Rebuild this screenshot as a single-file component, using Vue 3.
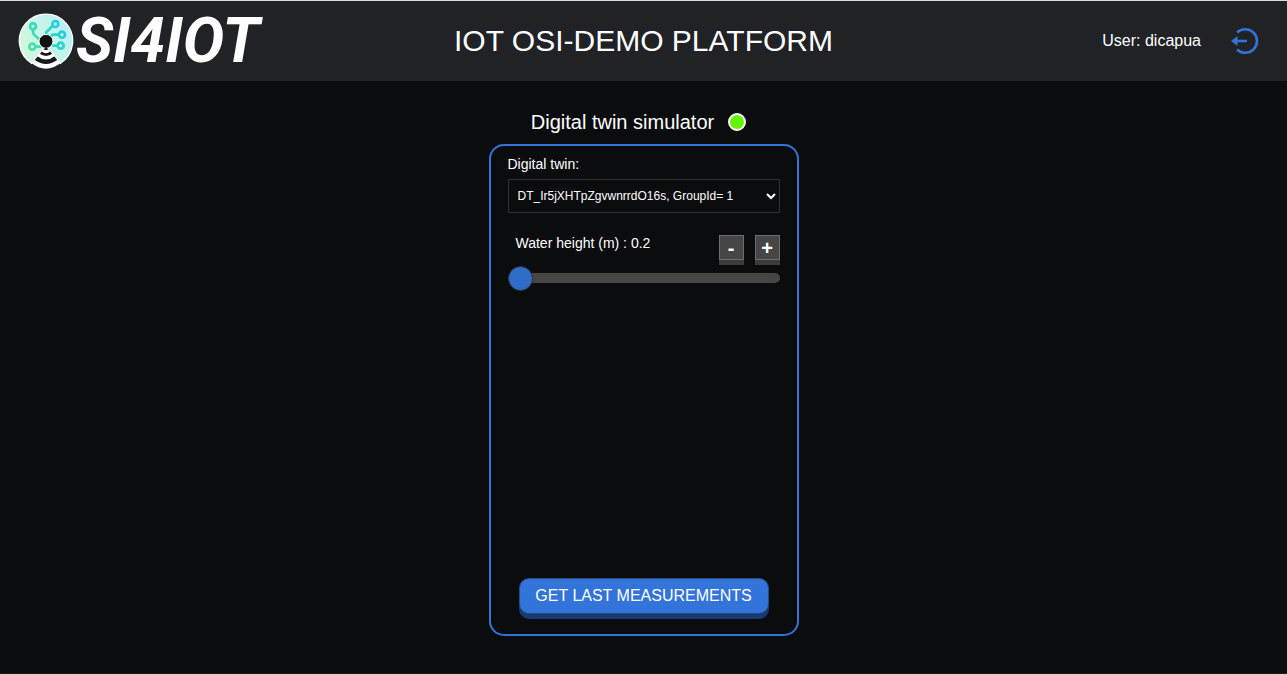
<script setup>
import { ref } from 'vue'

const twins = ['DT_Ir5jXHTpZgvwnrrdO16s, GroupId= 1']
const twin = ref(twins[0])
const height = ref(0.2)
const MIN = 0.2
const MAX = 5

function step(delta) {
  const next = Math.round((Number(height.value) + delta) * 10) / 10
  height.value = Math.min(MAX, Math.max(MIN, next))
}
</script>

<template>
  <div class="page">
    <header class="bar">
      <a class="brand" href="#" aria-label="OSI4IOT">
        <svg class="mark" viewBox="0 0 168 168" aria-hidden="true">
          <defs>
            <linearGradient id="disc" x1="0" y1="0.7" x2="1" y2="0.3">
              <stop offset="0" stop-color="#d2f8dc" />
              <stop offset="1" stop-color="#b9f0f6" />
            </linearGradient>
            <linearGradient id="trace" gradientUnits="userSpaceOnUse" x1="30" y1="110" x2="140" y2="40">
              <stop offset="0" stop-color="#4be3a4" />
              <stop offset="1" stop-color="#1fcbe0" />
            </linearGradient>
          </defs>
          <path d="M41 151A80 80 0 1 1 127 151L84 100Z" fill="url(#disc)" stroke="#fff" stroke-width="4" />
          <g fill="none" stroke="url(#trace)" stroke-width="8">
            <path d="M45 49V57Q45 63 50 67L64 79M104 39L85 57V66M122 65H104L92 76M52 101H66L76 95M117 98H106L95 91" />
            <circle cx="45" cy="40" r="9" />
            <circle cx="112" cy="33" r="9" />
            <circle cx="132" cy="65" r="9" />
            <circle cx="43" cy="101" r="9" />
            <circle cx="128" cy="98" r="9" />
          </g>
          <circle cx="84" cy="85" r="21" fill="#101114" stroke="#fff" stroke-width="3" />
          <path d="M84 101L43 149L64 164H104L125 149Z" fill="#17181b" />
          <g fill="none" stroke="#fff">
            <path d="M74 112Q84 120 94 112" stroke-width="9" />
            <path d="M60 125Q84 144 108 125" stroke-width="10" />
            <path d="M43 144Q84 176 125 144" stroke-width="14" />
          </g>
        </svg>
        <span class="word">SI4IOT</span>
      </a>
      <h1>IOT OSI-DEMO PLATFORM</h1>
      <div class="account">
        <span>User: dicapua</span>
        <button class="logout" type="button" aria-label="Log out">
          <svg viewBox="0 0 28 28" aria-hidden="true">
            <path d="M6 5.5A11.800 11.800 0 1 1 6 22.500" fill="none" stroke="#3274d9" stroke-width="2.6" />
            <path d="M5 14H16" stroke="#3274d9" stroke-width="2.6" />
            <path d="M0 14L6.500 9V19Z" fill="#3274d9" />
          </svg>
        </button>
      </div>
    </header>

    <main>
      <h2>Digital twin simulator <i class="lamp"></i></h2>
      <section class="panel">
        <label class="caption" for="twin">Digital twin:</label>
        <select id="twin" v-model="twin">
          <option v-for="t in twins" :key="t">{{ t }}</option>
        </select>
        <div class="row">
          <label for="level">Water height (m) : {{ height }}</label>
          <div class="steps">
            <button type="button" aria-label="Decrease" @click="step(-0.1)">-</button>
            <button type="button" aria-label="Increase" @click="step(0.1)">+</button>
          </div>
        </div>
        <input id="level" v-model.number="height" type="range" :min="MIN" :max="MAX" step="0.1" />
        <button class="fetch" type="button">GET LAST MEASUREMENTS</button>
      </section>
    </main>
  </div>
</template>

<style>
body {
  background: #0b0c0e;
}
</style>

<style scoped>
* {
  box-sizing: border-box;
}
.page {
  display: flex;
  flex-direction: column;
  min-height: 100vh;
  border-top: 1px solid #d5dfde;
  border-bottom: 1px solid #1c1e1a;
  background: #0b0c0e;
  color: #fff;
  font-family: "Liberation Sans", Arial, sans-serif;
}
.bar {
  display: grid;
  grid-template-columns: 1fr auto 1fr;
  align-items: center;
  height: 80px;
  padding: 0 18px;
  background: #202226;
}
.brand {
  display: flex;
  align-items: center;
  gap: 2px;
  color: #fff;
  text-decoration: none;
}
.mark {
  width: 56px;
  height: 56px;
}
.word {
  font: italic 700 62px/80px Roboto, sans-serif;
}
h1 {
  margin: 0;
  font-size: 30px;
  font-weight: 400;
  line-height: 36px;
}
.account {
  display: flex;
  align-items: center;
  justify-content: flex-end;
  gap: 30px;
  padding-right: 10px;
  font-size: 16px;
}
.logout {
  width: 28px;
  height: 28px;
  padding: 0;
  border: 0;
  background: none;
}
.logout svg {
  display: block;
}
main {
  display: flex;
  flex: 1;
  flex-direction: column;
  align-items: center;
  padding: 28px 16px 37px;
}
h2 {
  display: flex;
  align-items: center;
  gap: 14px;
  margin: 0 10px 9px 0;
  font-size: 20px;
  font-weight: 400;
  line-height: 26px;
}
.lamp {
  width: 18px;
  height: 18px;
  border: 2px solid #fff;
  border-radius: 50%;
  background: #62f700;
}
.panel {
  display: flex;
  flex: 1;
  flex-direction: column;
  width: 310px;
  max-width: 100%;
  padding: 10px 17px 20px;
  border: 2px solid #3274d9;
  border-radius: 15px;
  font-size: 14px;
}
.caption {
  line-height: 16px;
}
select {
  height: 34px;
  margin-top: 7px;
  padding: 0 1px 0 5px;
  border: 1px solid #2c3235;
  border-radius: 0;
  background: #0b0c0e;
  color: #fff;
  font: 12px "Liberation Sans", Arial, sans-serif;
}
.row {
  display: flex;
  justify-content: space-between;
  margin-top: 22px;
  padding-left: 8px;
  line-height: 16px;
}
.steps {
  display: flex;
  gap: 11px;
}
.steps button {
  width: 25px;
  height: 25px;
  padding: 0;
  border: 1px solid #6e6e6e;
  background: #464646;
  box-shadow: 0 5px #3c3c3c;
  color: #fff;
  font: bold 20px/20px "Liberation Sans", Arial, sans-serif;
}
input {
  appearance: none;
  height: 10px;
  margin: 13px 0 0;
  border-radius: 5px;
  background: #464646;
}
input::-webkit-slider-thumb {
  appearance: none;
  width: 25px;
  height: 25px;
  border: 1px solid #2c3235;
  border-radius: 50%;
  background: #2f6bc9;
}
.fetch {
  align-self: center;
  width: 250px;
  height: 36px;
  margin-top: auto;
  padding: 0;
  border: 1px solid #2c4a7c;
  border-radius: 10px;
  background: #3274d9;
  box-shadow: 0 5px #173a70;
  color: #fff;
  font: 16px "Liberation Sans", Arial, sans-serif;
}
</style>
